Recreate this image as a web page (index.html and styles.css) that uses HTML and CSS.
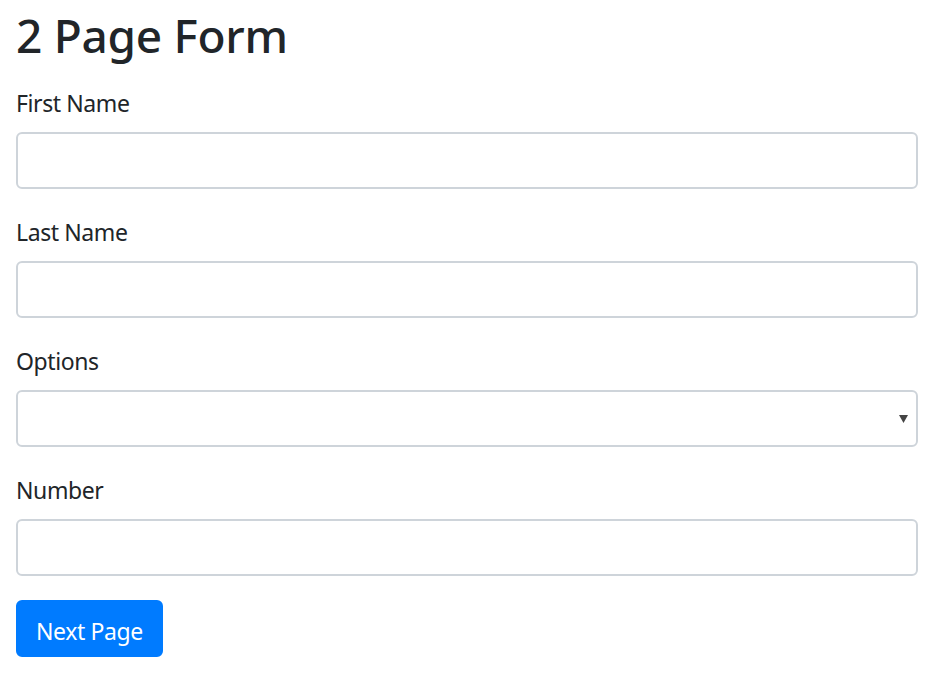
FILE: index.html
```html
<!DOCTYPE html>
<html lang="en">
<head>
<meta charset="utf-8">
<title>2 Page Form</title>
<link rel="stylesheet" href="styles.css">
</head>
<body>
<main class="page">
  <h2 class="title">2 Page Form</h2>
  <form class="form">
    <div class="group">
      <label class="label" for="first">First Name</label>
      <input class="control" id="first" type="text">
    </div>
    <div class="group">
      <label class="label" for="last">Last Name</label>
      <input class="control" id="last" type="text">
    </div>
    <div class="group">
      <label class="label" for="options">Options</label>
      <select class="control select" id="options">
        <option></option>
      </select>
    </div>
    <div class="group">
      <label class="label" for="number">Number</label>
      <input class="control" id="number" type="number">
    </div>
    <button class="btn" type="button">Next Page</button>
  </form>
</main>
</body>
</html>
```
FILE: styles.css
```css
* { box-sizing: border-box; }
html, body { margin: 0; padding: 0; background: #fff; }
body {
  font-family: "Noto Sans", "Open Sans", "DejaVu Sans", sans-serif;
  color: #212529;
  font-size: 23px;
  letter-spacing: -0.4px;
  line-height: 36px;
}
.page {
  padding: 6px 22px 0 16px;
}
.title {
  font-size: 46px;
  font-weight: 500;
  letter-spacing: -0.3px;
  line-height: 58px;
  margin: 0 0 20px 0;
}
.form { display: flex; flex-direction: column; align-items: flex-start; }
.group {
  width: 100%;
  display: flex;
  flex-direction: column;
  margin-bottom: 24px;
}
.label {
  display: block;
  padding-top: 1px;
  margin-bottom: 11px;
  line-height: 36px;
}
.control {
  display: block;
  width: 100%;
  height: 57px;
  padding: 9px 18px;
  font: inherit;
  color: #495057;
  background: #fff;
  border: 2px solid #ced4da;
  border-radius: 6px;
  outline: none;
}
.select {
  appearance: none;
  -webkit-appearance: none;
  background-image: url("data:image/svg+xml,%3Csvg xmlns='http://www.w3.org/2000/svg' width='9' height='8' viewBox='0 0 9 8'%3E%3Cpath d='M0 0H9L4.5 8Z' fill='%23444'/%3E%3C/svg%3E");
  background-repeat: no-repeat;
  background-position: right 8px center;
  background-size: 9px 8px;
}
.btn {
  font: inherit;
  letter-spacing: -0.4px;
  color: #fff;
  background: #007bff;
  border: 2px solid #007bff;
  border-radius: 6px;
  padding: 10px 18px 6px;
  height: 57px;
  cursor: pointer;
}
```
